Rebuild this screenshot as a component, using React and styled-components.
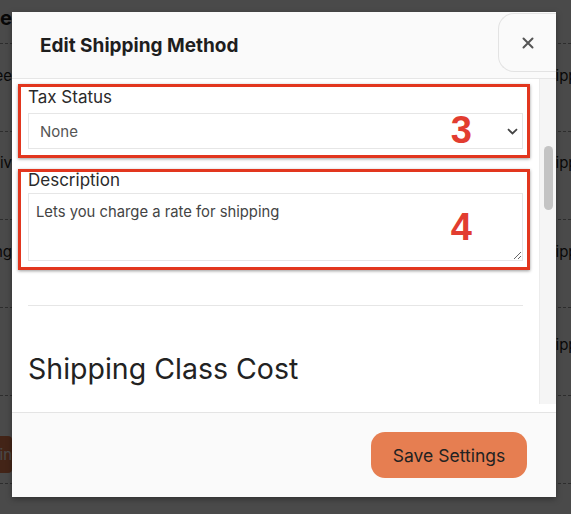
import React, { useLayoutEffect, useRef } from 'react';
import styled, { createGlobalStyle } from 'styled-components';

const Global = createGlobalStyle`
  html, body { margin: 0; padding: 0; width: 100%; height: 100%; overflow: hidden; }
  body { font-family: Inter, "Noto Sans", "Liberation Sans", sans-serif; background: #fff; color: #222; }
  * { box-sizing: border-box; }
`;

const Page = styled.div`
  position: relative;
  width: 571px;
  height: 514px;
  overflow: hidden;
  background: #fff;
`;

const BgTable = styled.div`
  display: flex;
  flex-direction: column;
`;

const BgRow = styled.div`
  height: ${p => p.$h}px;
  display: flex;
  justify-content: space-between;
  align-items: flex-start;
  padding-top: ${p => p.$pt}px;
  border-bottom: 1px dashed #9a9a9a;
  font-family: Inter, "Liberation Sans", sans-serif;
  font-size: 15px;
  line-height: 20px;
  color: #1d1d1d;
`;

const BgLeft = styled.div`
  width: 12px;
  display: flex;
  justify-content: flex-end;
  overflow: hidden;
  white-space: nowrap;
  font-weight: ${p => (p.$bold ? 700 : 400)};
  font-size: ${p => (p.$bold ? 20 : 15)}px;
`;

const BgRight = styled.div`
  width: 34px;
  overflow: hidden;
  white-space: nowrap;
`;

const BgButton = styled.div`
  margin-top: 40px;
  height: 37px;
  width: 60px;
  margin-left: -48px;
  background: #e67e51;
  border-radius: 0 4px 4px 0;
  display: flex;
  align-items: center;
  justify-content: flex-end;
  color: #fff;
  font-size: 15px;
`;

const Overlay = styled.div`
  position: absolute;
  inset: 0;
  background: rgba(0, 0, 0, 0.71);
  display: flex;
  align-items: flex-start;
  padding: 12px 15px 17px 12px;
`;

const Modal = styled.div`
  width: 544px;
  height: 485px;
  background: #fff;
  display: flex;
  flex-direction: column;
  overflow: hidden;
  box-shadow: 0 2px 6px rgba(0, 0, 0, 0.35);
`;

const Header = styled.div`
  height: 67px;
  flex: none;
  display: flex;
  align-items: flex-start;
  background: #fafafa;
  border-bottom: 1px solid #e6e6e6;
  padding-left: 28px;
`;

const Title = styled.h2`
  margin: 0;
  padding-top: 23px;
  font-size: 19px;
  line-height: 22px;
  font-weight: 700;
  color: #1e1e1e;
`;

const CloseButton = styled.button`
  margin-left: auto;
  margin-top: 1px;
  width: 58px;
  height: 59px;
  border: 1px solid #e3e3e3;
  border-right: none;
  border-radius: 16px 0 0 16px;
  background: #fafafa;
  display: flex;
  align-items: center;
  justify-content: center;
  padding: 0;
  cursor: pointer;
`;

const Body = styled.div`
  flex: 1;
  min-height: 0;
  display: flex;
`;

const ScrollArea = styled.div`
  position: relative;
  flex: 1;
  overflow: hidden;
`;

const ScrollTrack = styled.div`
  flex: none;
  width: 17px;
  margin-bottom: 8px;
  background: #f5f5f5;
  border-left: 1px solid #ececec;
  padding: 67px 3px 0 4px;
`;

const ScrollThumb = styled.div`
  height: 64px;
  border-radius: 5px;
  background: #c4c4c4;
`;

const Content = styled.div`
  display: flex;
  flex-direction: column;
  gap: 11px;
  padding: 16px 16px 40px 16px;
  min-height: 1733px;
`;

const Annotated = styled.div`
  position: relative;
  margin: 0 -7px 0 -10px;
  border: 3px solid #e2361e;
  box-shadow: 0 1px 3px rgba(0, 0, 0, 0.4);
  padding: 0 4px 6px 7px;
`;

const Marker = styled.span`
  position: absolute;
  right: 55px;
  top: ${p => p.$top}px;
  font-family: "Liberation Sans", Arial, sans-serif;
  font-weight: 700;
  font-size: 38px;
  line-height: 38px;
  color: #e23d30;
  pointer-events: none;
`;

const Field = styled.div`
  display: flex;
  flex-direction: column;
`;

const Label = styled.label`
  display: block;
  font-size: 17px;
  line-height: 20px;
  color: #2a2a2a;
  margin-top: ${p => p.$lift ? -p.$lift : 0}px;
  margin-bottom: ${p => p.$gap ?? 6}px;
`;

const SelectWrap = styled.div`
  position: relative;
  height: 36px;
`;

const Select = styled.select`
  appearance: none;
  -webkit-appearance: none;
  width: 100%;
  height: 36px;
  border: 1px solid #e6e6e6;
  border-radius: 0;
  background: #fff;
  padding: 0 30px 0 11px;
  font-family: inherit;
  font-size: 15px;
  color: #555;
  outline: none;
`;

const Chevron = styled.svg`
  position: absolute;
  right: 5px;
  top: 15px;
  pointer-events: none;
`;

const Input = styled.input`
  width: 100%;
  height: 36px;
  border: 1px solid #e6e6e6;
  padding: 0 11px;
  font-family: inherit;
  font-size: 15px;
  color: #555;
`;

const TextArea = styled.textarea`
  display: block;
  width: 100%;
  height: 68px;
  border: 1px solid #e6e6e6;
  border-radius: 0;
  padding: 8px 7px;
  font-family: inherit;
  font-size: 14.8px;
  line-height: 20px;
  color: #444;
  resize: vertical;
  outline: none;
`;

const Help = styled.p`
  margin: 8px 0 0;
  font-size: 13px;
  line-height: 18px;
  color: #777;
`;

const Divider = styled.hr`
  margin: 24px 0 0;
  border: none;
  border-top: 1px solid #e6e6e6;
`;

const SectionTitle = styled.h3`
  margin: 35px 0 0;
  font-size: 28.5px;
  line-height: 34px;
  font-weight: 400;
  color: #222;
`;

const Footer = styled.div`
  height: 85px;
  flex: none;
  background: #fafafa;
  border-top: 1px solid #e4e4e4;
  display: flex;
  align-items: center;
  justify-content: flex-end;
  padding-right: 29px;
`;

const SaveButton = styled.button`
  width: 156px;
  height: 46px;
  border: none;
  border-radius: 14px;
  background: #e67e51;
  font-family: inherit;
  font-size: 17.5px;
  color: #222;
  cursor: pointer;
`;

const bgRows = [
  { h: 44, pt: 8, left: 'Name', bold: true, right: '' },
  { h: 88, pt: 22, left: 'Free', right: 'Shipping' },
  { h: 88, pt: 21, left: 'Local Deliv', right: 'Shipping' },
  { h: 88, pt: 22, left: 'Shipping', right: 'Shipping' },
  { h: 88, pt: 27, left: '', right: 'Shipping' },
  { h: 88, pt: 0, button: true, right: '' },
];

export default function App() {
  const areaRef = useRef(null);
  const taxRef = useRef(null);

  useLayoutEffect(() => {
    if (areaRef.current && taxRef.current) {
      areaRef.current.scrollTop = taxRef.current.offsetTop - 5;
    }
  }, []);

  return (
    <>
      <Global />
      <Page>
        <BgTable>
          {bgRows.map((r, i) => (
            <BgRow key={i} $h={r.h} $pt={r.pt}>
              {r.button ? (
                <BgButton>Main</BgButton>
              ) : (
                <BgLeft $bold={r.bold}>
                  <span>{r.left}</span>
                </BgLeft>
              )}
              <BgRight>{r.right}</BgRight>
            </BgRow>
          ))}
        </BgTable>

        <Overlay>
          <Modal role="dialog" aria-label="Edit Shipping Method">
            <Header>
              <Title>Edit Shipping Method</Title>
              <CloseButton aria-label="Close">
                <svg width="12" height="12" viewBox="0 0 12 12">
                  <path d="M1.5 1.5L10.5 10.5M10.5 1.5L1.5 10.5" stroke="#555" strokeWidth="2" strokeLinecap="round" />
                </svg>
              </CloseButton>
            </Header>

            <Body>
              <ScrollArea ref={areaRef}>
                <Content>
                  <Annotated>
                    <Label>Method Title</Label>
                    <Input defaultValue="Flat rate" />
                    <Marker $top={24}>1</Marker>
                  </Annotated>
                  <Annotated>
                    <Label>Cost</Label>
                    <Input defaultValue="10.00" />
                    <Help>
                      Enter a cost (excl. tax) or sum, e.g. 10.00 * [qty]. Use [qty] for the number of items,
                      [cost] for the total cost of items, and [fee percent="10" min_fee="20" max_fee=""] for
                      percentage based fees.
                    </Help>
                    <Marker $top={24}>2</Marker>
                  </Annotated>
                  <Field>
                    <Label>Calculation Type</Label>
                    <SelectWrap>
                      <Select defaultValue="class">
                        <option value="class">Per class</option>
                        <option value="order">Per order</option>
                      </Select>
                    </SelectWrap>
                  </Field>

                  <Annotated ref={taxRef}>
                    <Label>Tax Status</Label>
                    <SelectWrap>
                      <Select defaultValue="none">
                        <option value="taxable">Taxable</option>
                        <option value="none">None</option>
                      </Select>
                      <Chevron width="11" height="7" viewBox="0 0 11 7">
                        <path d="M1 1.2L5.5 5.4L10 1.2" fill="none" stroke="#444" strokeWidth="1.8" />
                      </Chevron>
                    </SelectWrap>
                    <Marker $top={24}>3</Marker>
                  </Annotated>

                  <Annotated>
                    <Label $lift={2} $gap={3}>Description</Label>
                    <TextArea defaultValue="Lets you charge a rate for shipping" />
                    <Marker $top={36}>4</Marker>
                  </Annotated>

                  <Divider />
                  <SectionTitle>Shipping Class Cost</SectionTitle>
                </Content>
              </ScrollArea>
              <ScrollTrack aria-hidden="true">
                <ScrollThumb />
              </ScrollTrack>
            </Body>

            <Footer>
              <SaveButton>Save Settings</SaveButton>
            </Footer>
          </Modal>
        </Overlay>
      </Page>
    </>
  );
}
